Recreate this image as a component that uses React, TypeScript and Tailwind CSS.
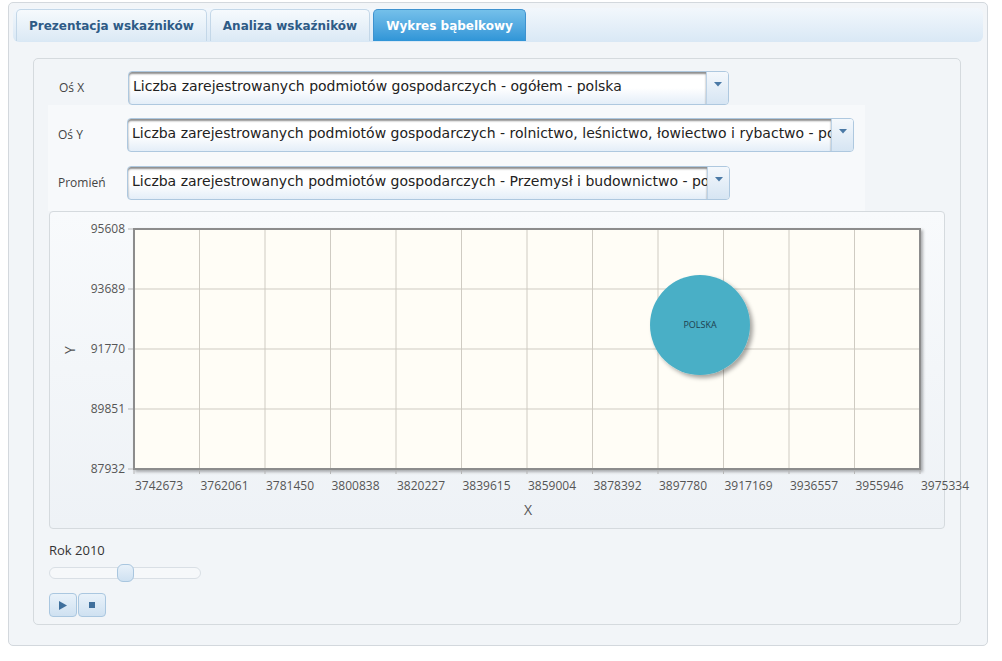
import React from 'react';

const xTicks = [
  '3742673', '3762061', '3781450', '3800838', '3820227', '3839615', '3859004',
  '3878392', '3897780', '3917169', '3936557', '3955946', '3975334',
];
const yTicks = ['95608', '93689', '91770', '89851', '87932'];

function Tab({ label, active }: { label: string; active?: boolean }) {
  return (
    <div
      className={
        active
          ? 'h-[32px] px-[12px] flex items-center rounded-t-[5px] border border-b-0 border-[#3e92cf] bg-gradient-to-b from-[#74c0ea] to-[#2f95d7] text-white'
          : 'h-[32px] px-[12px] flex items-center rounded-t-[5px] border border-b-0 border-[#c3d7e8] bg-gradient-to-b from-[#f6fafd] to-[#dbe9f5] text-[#2e5b86]'
      }
    >
      <span className="font-['DejaVu_Sans',sans-serif] font-bold text-[12px] whitespace-nowrap">{label}</span>
    </div>
  );
}

function Select({ text, width }: { text: string; width: string }) {
  return (
    <div className={`${width} h-[34px] flex rounded-[4px] border border-[#aec8df] overflow-hidden bg-gradient-to-b from-white via-white to-[#e4eef8]`}>
      <div className="flex-1 min-w-0 overflow-hidden shadow-[inset_0_2px_2px_rgba(0,0,0,0.45)] rounded-l-[3px] pl-[4px]">
        <span className="block whitespace-nowrap font-['DejaVu_Sans',sans-serif] text-[14px] leading-[28px] text-[#222]">{text}</span>
      </div>
      <div className="w-[22px] shrink-0 border-l border-[#bcd2e6] bg-gradient-to-b from-[#f4f8fc] to-[#d6e5f3] flex justify-center pt-[10px]">
        <svg width="8" height="5" viewBox="0 0 8 5">
          <path d="M0 0 L8 0 L4 4.5 Z" fill="#4a79a6" />
        </svg>
      </div>
    </div>
  );
}

function Row({ label, children }: { label: string; children: React.ReactNode }) {
  return (
    <div className="flex items-center h-[34px]">
      <div className="w-[79px] pl-[10px] font-['Open_Sans',sans-serif] text-[12px] text-[#444]">{label}</div>
      {children}
    </div>
  );
}

function Chart() {
  const left = 84;
  const top = 17;
  const w = 786;
  const h = 240;
  return (
    <svg width="894" height="316" className="overflow-visible block" style={{ fontFamily: "'Open Sans', sans-serif" }}>
      <defs>
        <filter id="sh" x="-20%" y="-20%" width="150%" height="150%">
          <feDropShadow dx="3" dy="3" stdDeviation="2" floodColor="#000" floodOpacity="0.35" />
        </filter>
        <filter id="psh" x="-5%" y="-5%" width="110%" height="110%">
          <feDropShadow dx="2" dy="2" stdDeviation="1.5" floodColor="#000" floodOpacity="0.3" />
        </filter>
      </defs>
      <rect x={left} y={top} width={w} height={h} fill="#fffdf6" stroke="#8c8c8c" strokeWidth="2" filter="url(#psh)" />
      {xTicks.map((_, i) => {
        const x = left + i * (w / 12);
        return (
          <g key={i}>
            {i > 0 && i < 12 && <line x1={x} y1={top + 1} x2={x} y2={top + h - 1} stroke="#cfcbc2" strokeWidth="1" />}
            <line x1={x} y1={top + h} x2={x} y2={top + h + 5} stroke="#b5b5b5" strokeWidth="1" />
            <text x={x + 1} y={top + h + 21} fontSize="12" fill="#555">{xTicks[i]}</text>
          </g>
        );
      })}
      {yTicks.map((t, i) => {
        const y = top + i * (h / 4);
        return (
          <g key={t}>
            {i > 0 && i < 4 && <line x1={left + 1} y1={y} x2={left + w - 1} y2={y} stroke="#cfcbc2" strokeWidth="1" />}
            <line x1={left - 6} y1={y} x2={left} y2={y} stroke="#b5b5b5" strokeWidth="1" />
            <text x={left - 9} y={y + 4} fontSize="12" fill="#555" textAnchor="end">{t}</text>
          </g>
        );
      })}
      <rect x={left} y={top} width={w} height={h} fill="none" stroke="#8c8c8c" strokeWidth="2" />
      <circle cx="650" cy="113" r="50" fill="#49afc6" filter="url(#sh)" />
      <text x="650" y="116" fontSize="9" fill="#1d3e4f" textAnchor="middle">POLSKA</text>
      <text x="478" y="303" fontSize="14" fill="#555" textAnchor="middle">X</text>
      <text x="0" y="0" fontSize="14" fill="#555" textAnchor="middle" transform="translate(25 138) rotate(-90)">Y</text>
    </svg>
  );
}

export default function App() {
  return (
    <div className="w-[1002px] h-[661px] bg-white pl-[8px] pt-[2px]">
      <div className="w-[980px] h-[644px] rounded-[5px] border border-[#d3d8dd] bg-[#f2f5f8] pl-[4px] pt-[5px]">
        {/* Tabs */}
        <div className="w-[970px] h-[34px] rounded-[6px] bg-gradient-to-b from-[#f2f7fc] to-[#d9e8f5] flex items-end gap-[3px] pl-[3px] pb-[1px]">
          <Tab label="Prezentacja wskaźników" />
          <Tab label="Analiza wskaźników" />
          <Tab label="Wykres bąbelkowy" active />
        </div>

        {/* Content panel */}
        <div className="ml-[20px] mt-[16px] w-[928px] h-[567px] rounded-[5px] border border-[#d5dade] bg-[#f2f5f8] px-[15px] pt-[12px]">
          <Row label="Oś X">
            <Select width="w-[601px]" text="Liczba zarejestrowanych podmiotów gospodarczych - ogółem - polska" />
          </Row>
          <div className="w-[817px] -ml-[1px] bg-[#f7f9fb] pt-[13px] pb-[11px] flex flex-col gap-[14px]">
            <Row label="Oś Y">
              <Select width="w-[727px]" text="Liczba zarejestrowanych podmiotów gospodarczych - rolnictwo, leśnictwo, łowiectwo i rybactwo - polska" />
            </Row>
            <Row label="Promień">
              <Select width="w-[603px]" text="Liczba zarejestrowanych podmiotów gospodarczych - Przemysł i budownictwo - polska" />
            </Row>
          </div>

          {/* Chart */}
          <div className="w-[896px] h-[318px] rounded-[4px] border border-[#d5dade] bg-gradient-to-b from-[#f8fafc] to-[#eef2f6]">
            <Chart />
          </div>

          {/* Slider + controls */}
          <div className="mt-[12px] font-['Open_Sans',sans-serif] text-[13px] text-[#333] leading-[18px]">Rok 2010</div>
          <div className="relative mt-[8px] w-[152px] h-[12px] rounded-full border border-[#d9dfe5] bg-[#f6f8fa]">
            <div className="absolute left-[67px] -top-[4px] w-[17px] h-[18px] rounded-[6px] border border-[#a9c6df] bg-gradient-to-b from-[#e8f1f9] to-[#cfe1f1]" />
          </div>
          <div className="mt-[14px] flex gap-[1px]">
            <button className="w-[28px] h-[24px] rounded-[4px] border border-[#aac7e0] bg-gradient-to-b from-[#e9f2fa] to-[#cfe1f1] flex items-center justify-center">
              <svg width="8" height="9" viewBox="0 0 8 9"><path d="M0 0 L8 4.5 L0 9 Z" fill="#3f6f9c" /></svg>
            </button>
            <button className="w-[28px] h-[24px] rounded-[4px] border border-[#aac7e0] bg-gradient-to-b from-[#e9f2fa] to-[#cfe1f1] flex items-center justify-center">
              <div className="w-[6px] h-[6px] bg-[#3f6f9c]" />
            </button>
          </div>
        </div>
      </div>
    </div>
  );
}
